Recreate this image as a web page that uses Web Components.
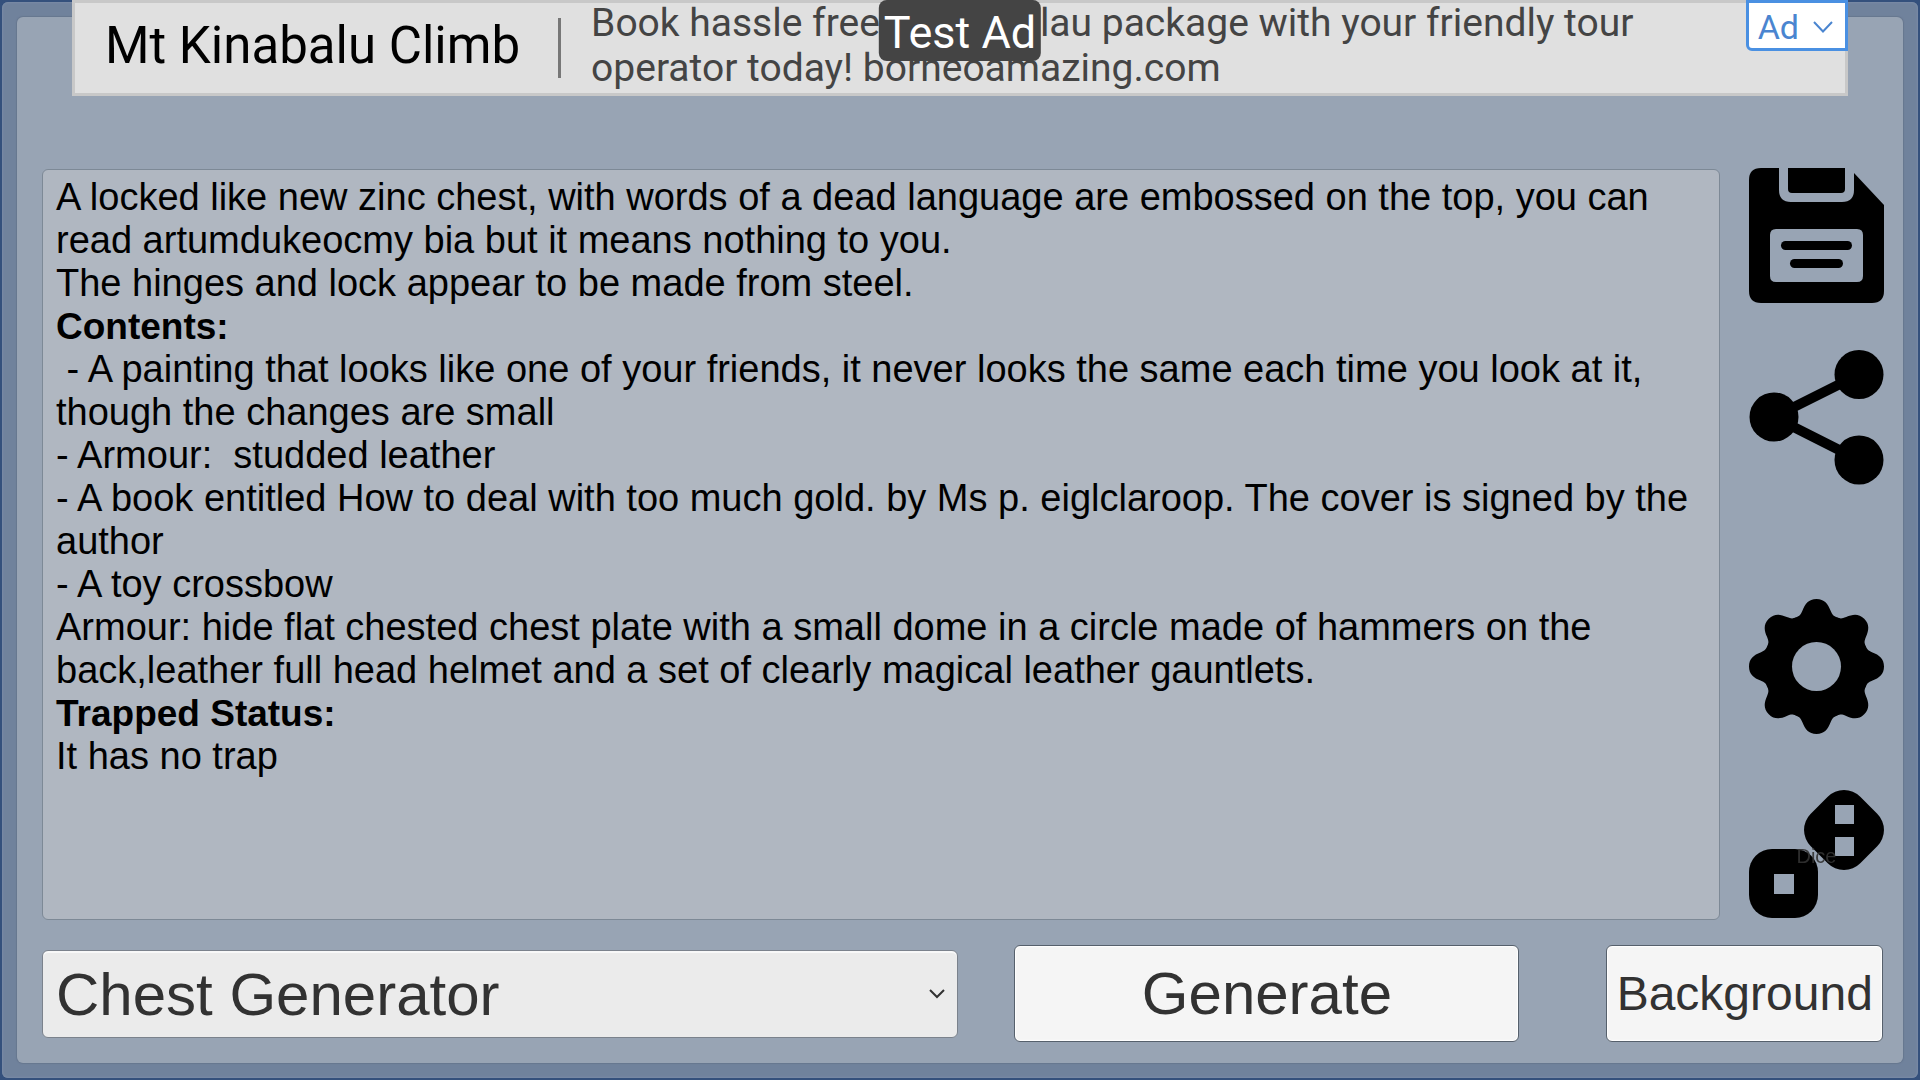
<!DOCTYPE html>
<html lang="en">
<head>
<meta charset="utf-8">
<meta name="viewport" content="width=device-width, initial-scale=1">
<title>Chest Generator</title>
<style>
  body {
    margin: 0;
    background: #34507c;
    font-family: "Liberation Sans", Arial, sans-serif;
    color: #000;
  }
</style>
</head>
<body>
<app-frame>
  <ad-banner slot="ad" heading="Mt Kinabalu Climb">
    Book hassle free<span class="gap"></span>lau package with your friendly tour operator today! borneoamazing.com
  </ad-banner>
  <result-box></result-box>
  <tool-bar slot="tools"></tool-bar>
  <generator-controls slot="controls"></generator-controls>
</app-frame>

<script>
// Outer frame and main panel
class AppFrame extends HTMLElement {
  constructor() {
    super();
    this.attachShadow({ mode: 'open' }).innerHTML = `
      <style>
        :host {
          display: flex;
          box-sizing: border-box;
          min-height: 100vh;
          padding: 2px;
          position: relative;
        }
        .frame {
          flex: 1;
          display: flex;
          padding: 15px;
          border-radius: 6px;
          background: #70829c;
          box-shadow: inset 0 0 2px 1px #7a8ba6;
        }
        .panel {
          flex: 1;
          display: grid;
          grid-template-columns: minmax(0, 1fr) auto;
          grid-template-rows: 1fr auto;
          gap: 25px 29px;
          padding: 151px 19px 21px 25px;
          border-radius: 6px;
          background: #98a4b4;
          box-shadow: 0 0 1px 1px #66778f;
        }
        .controls { grid-column: 1 / -1; padding-right: 1px; }
        .main { display: grid; padding-top: 1px; }
        .ad { position: absolute; top: 0; left: 72px; right: 72px; }
      </style>
      <div class="frame">
        <main class="panel">
          <div class="main"><slot></slot></div>
          <slot name="tools"></slot>
          <div class="controls"><slot name="controls"></slot></div>
        </main>
      </div>
      <div class="ad"><slot name="ad"></slot></div>
    `;
  }
}

// Ad strip at the top of the window
class AdBanner extends HTMLElement {
  constructor() {
    super();
    this.attachShadow({ mode: 'open' }).innerHTML = `
      <style>
        :host {
          display: flex;
          align-items: center;
          box-sizing: border-box;
          height: 96px;
          padding-left: 30px;
          border: 3px solid #c8c8c8;
          background: #e0e0e0;
          font-family: Roboto, sans-serif;
          position: relative;
        }
        h2, p { margin: 0 0 4px; }
        h2 { font-size: 51px; line-height: 60px; font-weight: 400; white-space: nowrap; }
        .line { width: 3px; height: 60px; margin: 0 30px 0 38px; background: #777; }
        p { max-width: 1100px; font-size: 39px; line-height: 45px; color: #444; }
        ::slotted(.gap) { display: inline-block; width: 160px; }
        .test {
          position: absolute;
          top: -3px;
          left: 50%;
          transform: translateX(-50%);
          padding: 7px 5px 2px;
          border-radius: 8px;
          background: #444;
          color: #fff;
          font-size: 45px;
          line-height: 52px;
          white-space: nowrap;
        }
        .choices {
          position: absolute;
          top: -3px;
          right: -3px;
          display: flex;
          align-items: center;
          gap: 14px;
          box-sizing: border-box;
          height: 51px;
          padding: 2px 12px 0 9px;
          border: 3px solid #4a90e2;
          border-bottom-left-radius: 6px;
          background: #fff;
          color: #4a85d0;
          font: 34px/40px Roboto, sans-serif;
        }
      </style>
      <h2></h2>
      <div class="line"></div>
      <p><slot></slot></p>
      <span class="test">Test Ad</span>
      <button class="choices" type="button">Ad
        <svg width="20" height="12" viewBox="0 0 20 12" fill="none" stroke="currentColor" stroke-width="2"><path d="M1 1l9 9.500 9-9.500"/></svg>
      </button>
    `;
  }

  connectedCallback() {
    this.shadowRoot.querySelector('h2').textContent = this.getAttribute('heading');
  }
}

// Generated text
class ResultBox extends HTMLElement {
  constructor() {
    super();
    this.attachShadow({ mode: 'open' });
  }

  connectedCallback() {
    this.render([
      'A locked like new zinc chest, with words of a dead language are embossed on the top, you can read artumdukeocmy bia but it means nothing to you.',
      'The hinges and lock appear to be made from steel.',
      '*Contents:',
      ' - A painting that looks like one of your friends, it never looks the same each time you look at it, though the changes are small',
      '- Armour:  studded leather',
      '- A book entitled How to deal with too much gold. by Ms p. eiglclaroop. The cover is signed by the author',
      '- A toy crossbow',
      'Armour: hide flat chested chest plate with a small dome in a circle made of hammers on the back,leather full head helmet and a set of clearly magical leather gauntlets.',
      '*Trapped Status:',
      'It has no trap'
    ]);
  }

  render(lines) {
    this.shadowRoot.innerHTML = `
      <style>
        :host {
          display: block;
          padding: 6px 13px;
          border: 1px solid #7d8996;
          border-radius: 6px;
          background: #b0b7c1;
          font-size: 38px;
          line-height: 43px;
        }
        p { margin: 0; white-space: pre-wrap; }
        .title { font-size: 37px; font-weight: 700; }
      </style>
    `;
    lines.forEach(line => {
      const p = document.createElement('p');
      if (line.startsWith('*')) p.className = 'title';
      p.textContent = line.replace('*', '');
      this.shadowRoot.appendChild(p);
    });
  }
}

// Icon button, the slot holds a caption drawn over the icon
const TOOTH = 'M67.500 67.500L47.100 18.300C50.800 16.800 51.500 16 53.500 11.500C56 5 59.500 0 67.500 0S79 5 81.500 11.500C83.500 16 84.200 16.800 87.900 18.300Z';
const ICONS = {
  save: `
    <path fill-rule="evenodd" d="M12 0H30V22Q30 34 42 34H93Q105 34 105 22V5L135 37V123Q135 135 123 135H12Q0 135 0 123V12Q0 0 12 0Z
      M27 61Q21 61 21 67V108Q21 114 27 114H108Q114 114 114 108V67Q114 61 108 61Z"/>
    <path d="M39 0H96V21Q96 25 92 25H43Q39 25 39 21Z"/>
    <rect x="32" y="73" width="71" height="9" rx="4.500"/>
    <rect x="41" y="91" width="53" height="9" rx="4.500"/>`,
  share: `
    <path d="M110 24.500L25 67L110 110" fill="none" stroke="#000" stroke-width="10"/>
    <circle cx="25" cy="67" r="24.500"/>
    <circle cx="110" cy="24.500" r="24.500"/>
    <circle cx="110" cy="110" r="24.500"/>`,
  settings: `
    <mask id="hole"><rect width="135" height="135" fill="#fff"/><circle cx="67.500" cy="67.500" r="24.500" fill="#000"/></mask>
    <g mask="url(#hole)">
      <circle cx="67.500" cy="67.500" r="53"/>
      ${[0, 45, 90, 135, 180, 225, 270, 315].map(a => `<path d="${TOOTH}" transform="rotate(${a} 67.500 67.500)"/>`).join('')}
    </g>`,
  dice: `
    <mask id="pips"><rect width="135" height="135" fill="#fff"/>
      <path d="M25 89h20v20h-20zM86 20h19v19h-19zM86 52h19v19h-19z"/></mask>
    <g mask="url(#pips)">
      <rect x="0" y="64" width="69" height="69" rx="23"/>
      <rect x="60" y="10" width="70" height="70" rx="23" transform="rotate(45 95 45)"/>
    </g>`
};

class IconButton extends HTMLElement {
  constructor() {
    super();
    this.attachShadow({ mode: 'open' });
  }

  connectedCallback() {
    const icon = this.getAttribute('icon');
    this.shadowRoot.innerHTML = `
      <style>
        :host { display: block; }
        button {
          display: grid;
          place-items: center;
          width: 135px;
          height: 135px;
          padding: 0;
          border: 0;
          background: none;
          color: #323232;
          font: 20px/24px "Liberation Sans", Arial, sans-serif;
          cursor: pointer;
        }
        svg, span { grid-area: 1 / 1; }
        span { padding-top: 6px; opacity: .9; z-index: 1; }
      </style>
      <button type="button" aria-label="${icon}">
        <svg width="135" height="135" viewBox="0 0 135 135">${ICONS[icon]}</svg>
        <span><slot></slot></span>
      </button>
    `;
  }
}

// Right column
class ToolBar extends HTMLElement {
  constructor() {
    super();
    this.attachShadow({ mode: 'open' }).innerHTML = `
      <style>
        :host { display: flex; flex-direction: column; justify-content: space-between; }
        div { display: grid; gap: 47px; }
        div + div { gap: 51px; }
      </style>
      <div>
        <icon-button icon="save"></icon-button>
        <icon-button icon="share"></icon-button>
      </div>
      <div>
        <icon-button icon="settings"></icon-button>
        <icon-button icon="dice">Dice</icon-button>
      </div>
    `;
  }
}

// Bottom row
class GeneratorControls extends HTMLElement {
  constructor() {
    super();
    this.attachShadow({ mode: 'open' }).innerHTML = `
      <style>
        :host { display: flex; align-items: center; }
        .pick { flex: 918 1 0; display: grid; align-items: center; }
        select, svg { grid-area: 1 / 1; }
        svg { justify-self: end; margin-right: 13px; pointer-events: none; }
        select, button {
          box-sizing: border-box;
          min-width: 0;
          margin: 0;
          border: 1px solid #56606c;
          border-radius: 6px;
          color: #323232;
          font-family: inherit;
          font-size: 60px;
        }
        select {
          appearance: none;
          width: 100%;
          height: 88px;
          padding: 2px 40px 0 13px;
          border-color: #7b828c;
          background: #ebebeb;
          box-shadow: inset 0 2px #f8f8f8;
        }
        button { height: 97px; padding: 0; background: #f5f5f5; box-shadow: inset 0 0 1px 1px #fff; }
        .generate { flex: 504 1 0; margin: 0 87px 0 56px; }
        .background { flex: 275 1 0; font-size: 48px; }
      </style>
      <div class="pick">
        <select aria-label="Generator"><option>Chest Generator</option></select>
        <svg width="16" height="10" viewBox="0 0 16 10" fill="none" stroke="#323232" stroke-width="2"><path d="M1 1l7 7 7-7"/></svg>
      </div>
      <button class="generate" type="button">Generate</button>
      <button class="background" type="button">Background</button>
    `;
  }
}

customElements.define('app-frame', AppFrame);
customElements.define('ad-banner', AdBanner);
customElements.define('result-box', ResultBox);
customElements.define('icon-button', IconButton);
customElements.define('tool-bar', ToolBar);
customElements.define('generator-controls', GeneratorControls);
</script>
</body>
</html>
